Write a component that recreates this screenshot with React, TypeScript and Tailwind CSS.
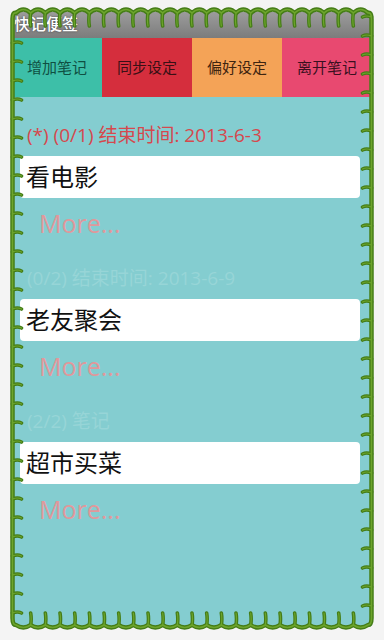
import React from "react";

const FONT = { fontFamily: '"Open Sans", "Noto Sans CJK SC", sans-serif' };

function buildFrame() {
  const L = 12.5, R = 371.5, T = 12, B = 625;
  let d = "";
  const topStart = 16, topEnd = 368;
  const nTop = 24;
  const wT = (topEnd - topStart) / nTop;
  d += `M ${L} ${T + 7} Q ${L} ${T} ${topStart} ${T + 1} `;
  for (let i = 0; i < nTop; i++) {
    const x0 = topStart + i * wT;
    d += `Q ${x0 + wT / 2} ${T - 6} ${x0 + wT} ${T + 1} `;
  }
  d += `Q ${R} ${T} ${R} ${T + 7} `;
  d += `L ${R} ${B - 7} `;
  const nBot = 24;
  const wB = (topEnd - topStart) / nBot;
  d += `Q ${R} ${B} ${topEnd} ${B} `;
  for (let i = nBot - 1; i >= 0; i--) {
    const x0 = topStart + i * wB;
    d += `Q ${x0 + wB / 2} ${B + 5} ${x0} ${B} `;
  }
  d += `Q ${L} ${B} ${L} ${B - 7} Z`;

  const ticks: string[] = [];
  for (let i = 1; i < nTop; i++) {
    const x = topStart + i * wT;
    ticks.push(`M ${x} ${T + 1} Q ${x - 1} ${T + 8} ${x} ${T + 14}`);
  }
  for (let i = 1; i < nBot; i++) {
    const x = topStart + i * wB;
    ticks.push(`M ${x} ${B} Q ${x + 1} ${B - 6} ${x} ${B - 12}`);
  }
  for (let y = 43; y < B - 8; y += 19) {
    ticks.push(`M ${L} ${y} Q ${L + 5} ${y - 2} ${L + 9} ${y}`);
  }
  for (let y = 17; y < B - 8; y += 19) {
    ticks.push(`M ${R} ${y} Q ${R - 5} ${y - 2} ${R - 9} ${y}`);
  }
  return { d, ticks: ticks.join(" ") };
}

function Frame() {
  const { d, ticks } = buildFrame();
  return (
    <svg
      className="absolute inset-0 pointer-events-none"
      width={384}
      height={640}
      viewBox="0 0 384 640"
    >
      <path d={d} fill="none" stroke="#457d17" strokeWidth={4.5} strokeLinejoin="round" />
      <path d={ticks} fill="none" stroke="#457d17" strokeWidth={3.6} strokeLinecap="round" />
      <path d={d} fill="none" stroke="#6da52c" strokeWidth={1.6} strokeLinejoin="round" />
      <path d={ticks} fill="none" stroke="#6da52c" strokeWidth={1.2} strokeLinecap="round" />
    </svg>
  );
}

type Group = { header: string; headerClass: string; title: string };

const groups: Group[] = [
  { header: "(*) (0/1) 结束时间: 2013-6-3", headerClass: "text-[#d6484d]", title: "看电影" },
  { header: "(0/2) 结束时间: 2013-6-9", headerClass: "text-[#97d5d7]", title: "老友聚会" },
  { header: "(2/2) 笔记", headerClass: "text-[#97d5d7]", title: "超市买菜" },
];

export default function App() {
  return (
    <div
      className="relative w-[384px] h-[640px] bg-[#f4f4f4] pt-[12px] pl-[12px] pr-[12px] pb-[14px] overflow-hidden"
      style={FONT}
    >
      <div className="flex flex-col h-full bg-[#84cdd0]">
        <div className="h-[26px] bg-gradient-to-b from-[#9c9c9c] to-[#7c7c7c] pl-[2px] flex items-start">
          <span
            className="text-white text-[16px] leading-[22px] mt-[1px] font-medium"
            style={{ textShadow: "0 0 2px rgba(0,0,0,0.6)" }}
          >
            快记便签
          </span>
        </div>
        <div className="grid grid-cols-4 h-[59px]">
          <div className="bg-[#3dbfa8] flex items-center justify-center text-[15px] text-[#0f4f42]">增加笔记</div>
          <div className="bg-[#d52e3d] flex items-center justify-center text-[15px] text-[#3a1015]">同步设定</div>
          <div className="bg-[#f4a357] flex items-center justify-center text-[15px] text-[#3f2510]">偏好设定</div>
          <div className="bg-[#e84970] flex items-center justify-center text-[15px] text-[#3a1020]">离开笔记</div>
        </div>
        <div className="flex flex-col pt-[26px] pl-[8px] pr-[12px]">
          {groups.map((g, i) => (
            <div key={i} className="flex flex-col">
              <div className={`h-[24px] leading-[24px] text-[19px] pl-[7px] whitespace-nowrap ${g.headerClass}`}>
                {g.header}
              </div>
              <div className="mt-[9px] h-[42px] bg-white rounded-[4px] flex items-center pl-[6px] text-[24px] text-[#111]">
                {g.title}
              </div>
              <div className="mt-[10px] h-[30px] leading-[30px] text-[25px] pl-[19px] text-[#e0989b]">More...</div>
              <div className="h-[28px]" />
            </div>
          ))}
        </div>
      </div>
      <Frame />
    </div>
  );
}
